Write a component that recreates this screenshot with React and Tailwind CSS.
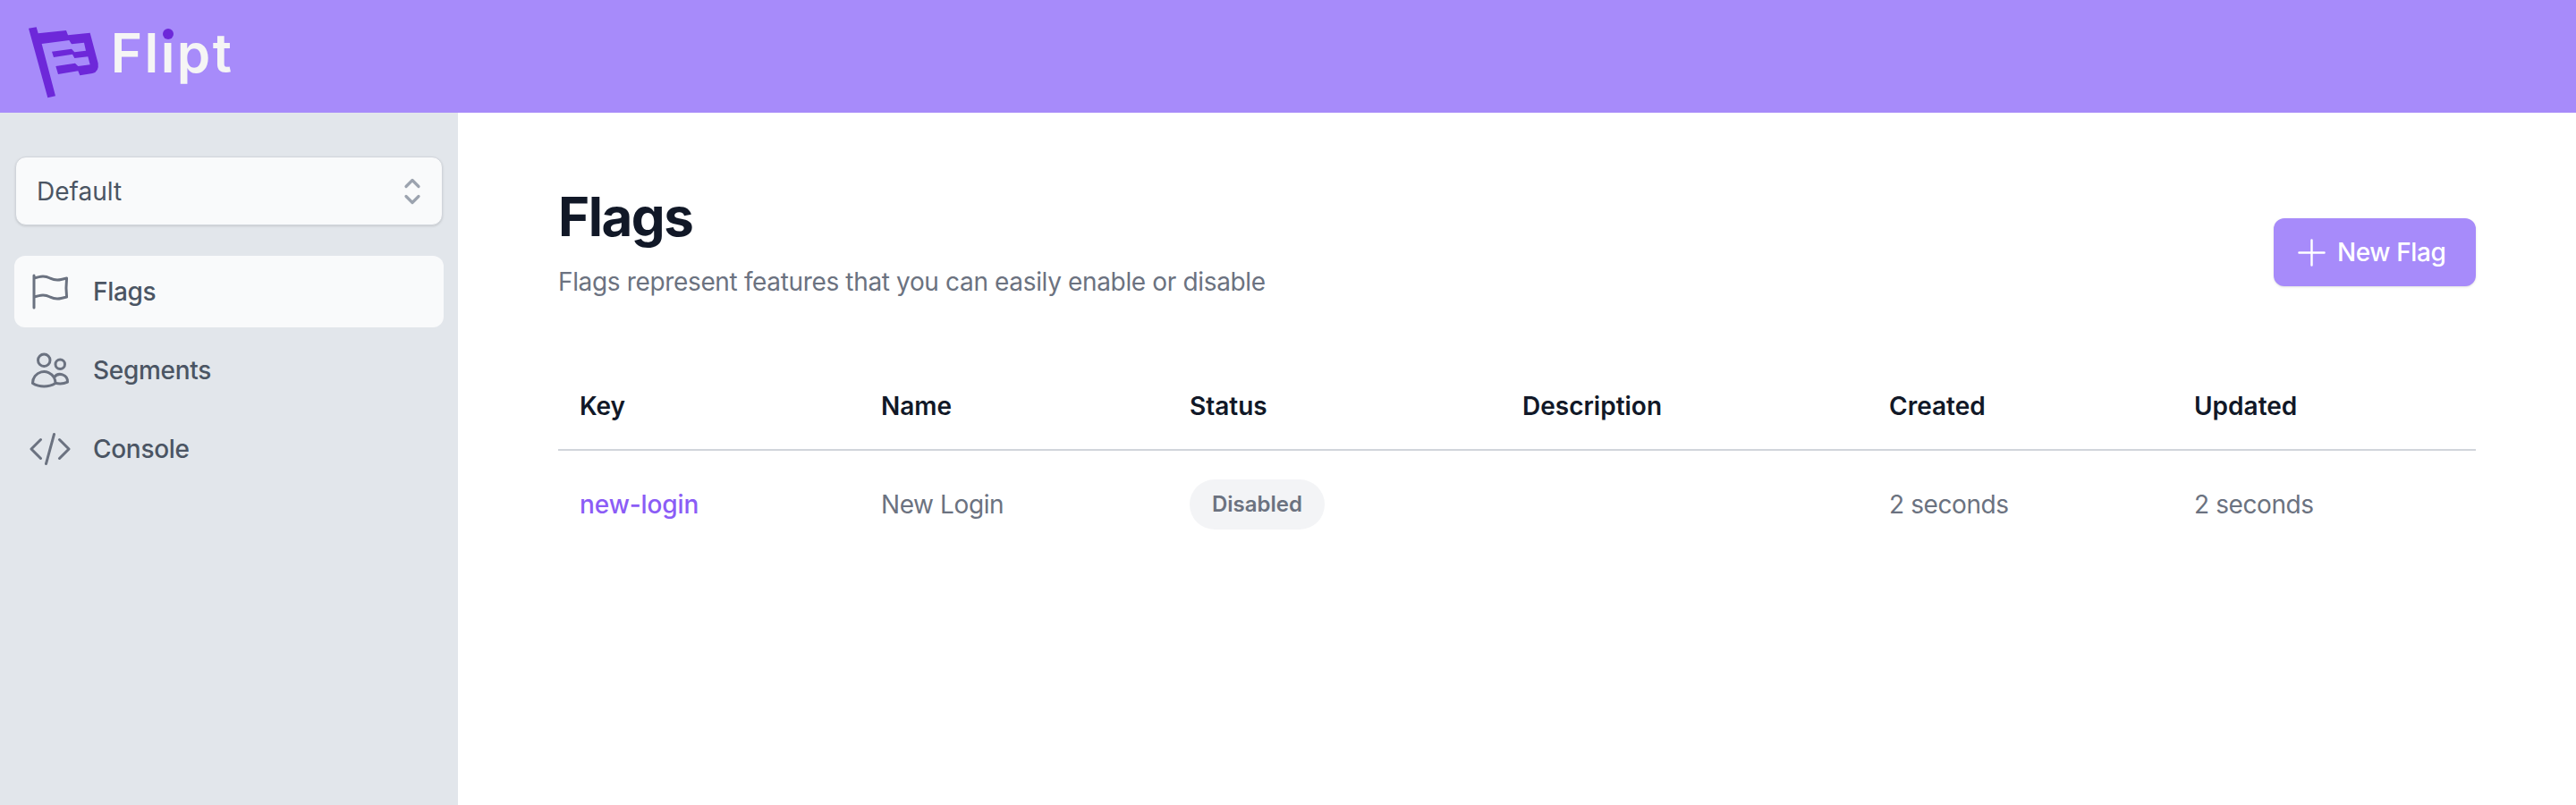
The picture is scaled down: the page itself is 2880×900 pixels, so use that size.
import React from "react";
import { HiOutlineFlag, HiOutlineUsers, HiOutlineCodeBracket, HiOutlinePlus } from "react-icons/hi2";

function Logo() {
  return (
    <svg viewBox="96 90 236 240" className="h-[80px] w-[78.67px] shrink-0" fill="#6d28d9">
      <path d="M96 95L122 91L128 112L222 102L228 118L302 110L329 212Q333 240 310 246L268 253L262 238L195 249L187 222L252 212L262 222L302 217L295 190L250 195L243 182L180 192L174 173L240 164L250 175L288 170L282 143L240 148L232 135L140 147L186 322L160 328Z" />
    </svg>
  );
}

const columns = [
  ["Key", "w-[337px]"],
  ["Name", "w-[345px]"],
  ["Status", "w-[372px]"],
  ["Description", "w-[410px]"],
  ["Created", "w-[341px]"],
  ["Updated", "w-[339px]"],
];

const nav = [
  ["Flags", HiOutlineFlag, true],
  ["Segments", HiOutlineUsers, false],
  ["Console", HiOutlineCodeBracket, false],
];

export default function App() {
  return (
    <div className="flex h-screen flex-col overflow-hidden bg-white font-['Inter',sans-serif]">
      <header className="flex h-[126px] shrink-0 items-start bg-[#a78bfa] pl-[32px] pt-[30px]">
        <Logo />
        <div className="relative ml-[13px] mt-[-7px] text-[60px] font-semibold leading-[72px] tracking-[2.5px] text-[#f5f5f5]">
          Flipt
          <span className="absolute left-[58px] top-[9px] h-[12px] w-[12px] rounded-full bg-[#6d28d9]" />
        </div>
      </header>
      <div className="flex min-h-0 flex-1">
        <aside className="flex w-[512px] shrink-0 flex-col bg-[#e2e6eb] px-[16px] pt-[49px]">
          <div className="mx-[1px] flex h-[77px] items-center justify-between rounded-[12px] border border-[#d1d5db] bg-[#f9fafb] pl-[23px] pr-[23px] text-[28px] leading-[40px] text-[#4b5563] shadow-sm">
            <span>Default</span>
            <svg viewBox="0 0 20 32" className="h-[32px] w-[20px]" fill="none" stroke="#9ca3af" strokeWidth="3.2" strokeLinecap="round" strokeLinejoin="round">
              <path d="M3 10.5L10 3.5L17 10.5" />
              <path d="M3 21.5L10 28.5L17 21.5" />
            </svg>
          </div>
          <nav className="mt-[34px] flex flex-col gap-[8px]">
            {nav.map(([label, Icon, active]) => (
              <div key={label} className={`flex h-[80px] items-center rounded-[12px] pl-[16px] text-[28px] font-medium leading-[40px] tracking-[-0.3px] text-[#4b5563] ${active ? "bg-[#f9fafb]" : ""}`}>
                <Icon className="mr-[24px] h-[48px] w-[48px] text-[#6b7280]" />
                {label}
              </div>
            ))}
          </nav>
        </aside>
        <main className="min-w-0 flex-1 px-[112px] pt-[80px]">
          <div className="flex items-end justify-between">
            <div>
              <h1 className="text-[60px] font-bold leading-[72px] tracking-[-1.5px] text-[#111827]">Flags</h1>
              <p className="mb-[1px] mt-[17px] text-[28px] leading-[40px] tracking-[-0.35px] text-[#6b7280]">Flags represent features that you can easily enable or disable</p>
            </div>
            <button className="mb-[16px] flex h-[76px] w-[226px] items-center rounded-[12px] bg-[#a78bfa] pl-[20px] text-[28px] font-medium leading-[40px] tracking-[-0.4px] text-white shadow-sm">
              <HiOutlinePlus strokeWidth={1.3} className="mr-[6px] h-[45px] w-[45px]" />
              New Flag
            </button>
          </div>
          <table className="mt-[68px] w-[2144px] table-fixed border-collapse">
            <thead>
              <tr className="border-b-2 border-[#d1d5db]">
                {columns.map(([label, w]) => (
                  <th key={label} className={`${w} pb-[28px] pl-[24px] pt-[30px] text-left text-[28px] font-semibold leading-[40px] text-[#111827]`}>{label}</th>
                ))}
              </tr>
            </thead>
            <tbody>
              <tr className="text-[28px] leading-[40px] tracking-[-0.4px] text-[#6b7280]">
                <td className="h-[120px] pl-[24px] font-medium tracking-[-0.1px] text-[#8b5cf6]">new-login</td>
                <td className="pl-[24px]">New Login</td>
                <td className="pl-[24px]">
                  <span className="inline-flex h-[56px] items-center rounded-full bg-[#f3f4f6] px-[25px] align-middle text-[24px] font-semibold tracking-normal text-[#6b7280]">Disabled</span>
                </td>
                <td className="pl-[24px]" />
                <td className="pl-[24px]">2 seconds</td>
                <td className="pl-[24px]">2 seconds</td>
              </tr>
            </tbody>
          </table>
        </main>
      </div>
    </div>
  );
}
